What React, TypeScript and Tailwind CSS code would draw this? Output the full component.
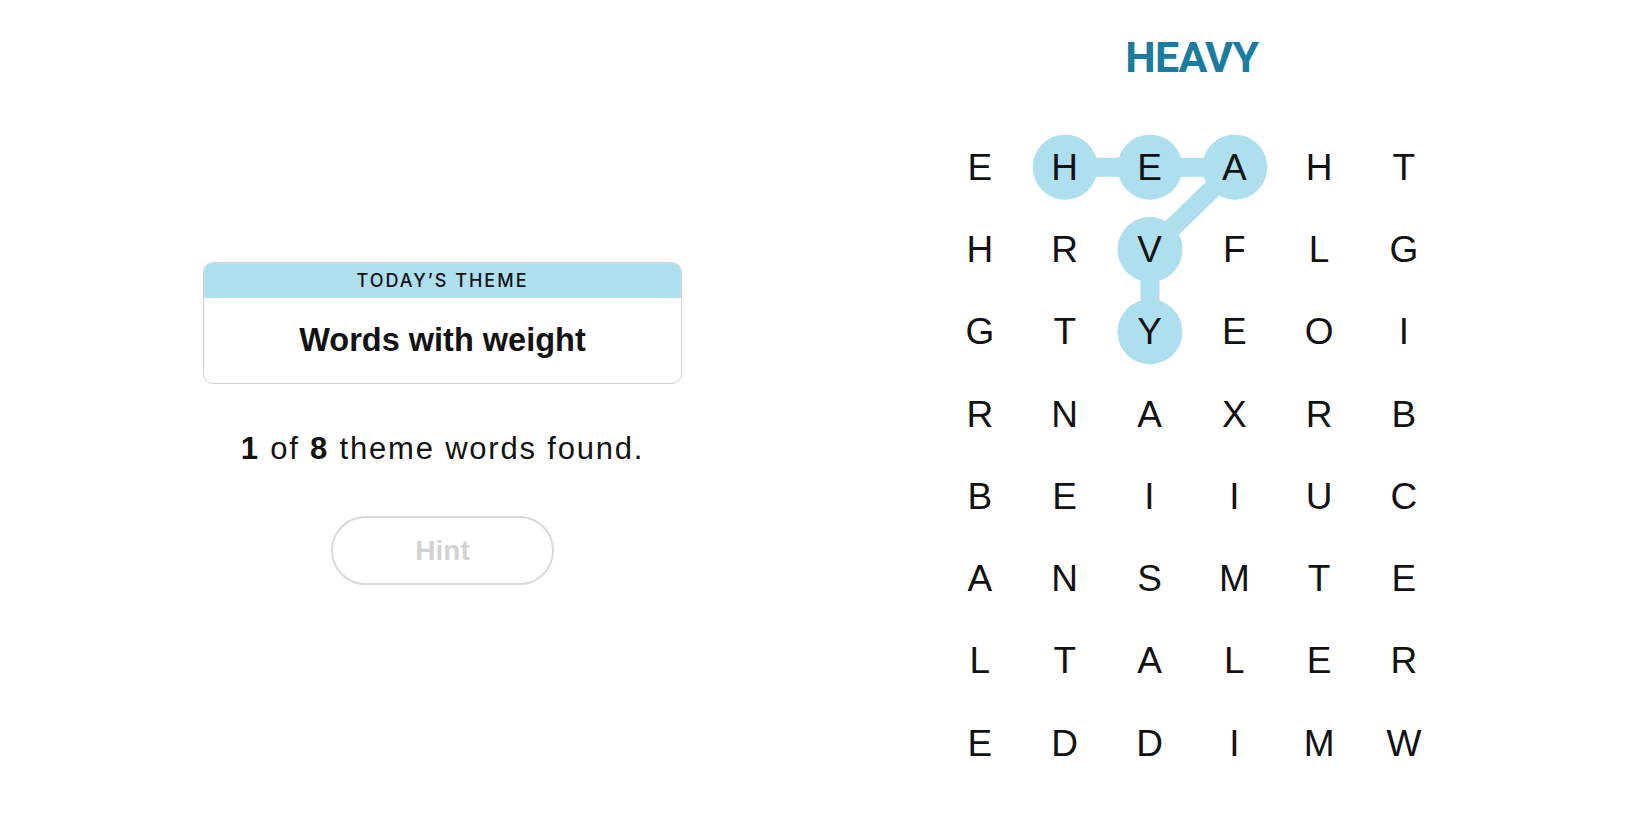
const grid = [
  ['E', 'H', 'E', 'A', 'H', 'T'],
  ['H', 'R', 'V', 'F', 'L', 'G'],
  ['G', 'T', 'Y', 'E', 'O', 'I'],
  ['R', 'N', 'A', 'X', 'R', 'B'],
  ['B', 'E', 'I', 'I', 'U', 'C'],
  ['A', 'N', 'S', 'M', 'T', 'E'],
  ['L', 'T', 'A', 'L', 'E', 'R'],
  ['E', 'D', 'D', 'I', 'M', 'W'],
]

const CELL_W = 84.8
const CELL_H = 82.3

// path of the current selection: H-E-A-V-Y
const selected: [number, number][] = [
  [1, 0],
  [2, 0],
  [3, 0],
  [2, 1],
  [2, 2],
]

const center = ([c, r]: [number, number]) => ({
  x: c * CELL_W + CELL_W / 2,
  y: r * CELL_H + CELL_H / 2,
})

function Board() {
  const points = selected.map(center)
  return (
    <div className="relative h-[658.4px] w-[508.8px]">
      <svg className="absolute inset-0" width="508.8" height="658.4">
        <polyline
          points={points.map((p) => `${p.x},${p.y}`).join(' ')}
          fill="none"
          stroke="#aedfee"
          strokeWidth="19"
          strokeLinejoin="round"
        />
        {points.map((p, i) => (
          <circle key={i} cx={p.x} cy={p.y} r="32.5" fill="#aedfee" />
        ))}
      </svg>
      <div className="relative grid grid-cols-[repeat(6,84.8px)] grid-rows-[repeat(8,82.3px)]">
        {grid.flat().map((letter, i) => (
          <div
            key={i}
            className="flex items-center justify-center text-[37px] leading-none text-[#121212]"
          >
            {letter}
          </div>
        ))}
      </div>
    </div>
  )
}

export default function App() {
  return (
    <main className="flex h-[825px] w-full bg-white font-['Liberation_Sans',Arial,sans-serif] text-[#121212]">
      <section className="ml-[203px] flex w-[479px] flex-col items-center pt-[262px]">
        <div className="w-full overflow-hidden rounded-[10px] border border-[#d2d2d2]">
          <div className="flex h-[35px] items-center justify-center bg-[#aedfee] font-['Inter',sans-serif] text-[18px] font-medium tracking-[2px]">
            TODAY’S THEME
          </div>
          <div className="flex h-[85px] items-center justify-center text-[32.5px] font-bold">
            Words with weight
          </div>
        </div>
        <p className="mt-[47px] text-[31px] leading-[36px] tracking-[0.058em]">
          <span className="font-bold">1</span> of <span className="font-bold">8</span> theme words found.
        </p>
        <button className="mt-[49px] flex h-[69px] w-[223px] items-center justify-center rounded-full border-2 border-[#d9d9d9] text-[28px] font-bold text-[#d2d2d2]">
          Hint
        </button>
      </section>

      <section className="ml-[255.5px] flex w-[508.8px] flex-col items-center">
        <h1 className="mt-[31px] h-[52px] font-['Roboto',sans-serif] text-[43px] leading-[52px] font-bold tracking-[-0.6px] text-[#1a7c9e]">
          HEAVY
        </h1>
        <div className="mt-[43px]">
          <Board />
        </div>
      </section>
    </main>
  )
}
